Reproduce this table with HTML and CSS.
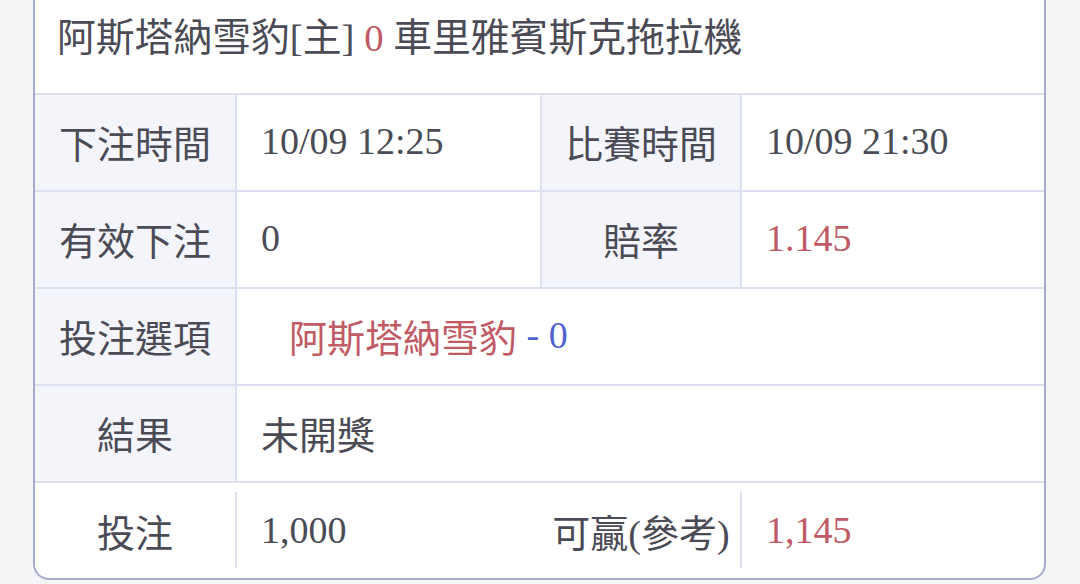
FILE: index.html
```html
<!DOCTYPE html>
<html lang="zh-Hant">
<head>
<meta charset="utf-8">
<link rel="stylesheet" href="styles.css">
</head>
<body>
<div class="card">
  <div class="head">阿斯塔納雪豹[主] <span class="red">0</span> 車里雅賓斯克拖拉機</div>
  <div class="row">
    <div class="cell label">下注時間</div>
    <div class="cell value">10/09 12:25</div>
    <div class="cell label label2">比賽時間</div>
    <div class="cell value last">10/09 21:30</div>
  </div>
  <div class="row">
    <div class="cell label">有效下注</div>
    <div class="cell value">0</div>
    <div class="cell label label2">賠率</div>
    <div class="cell value last red">1.145</div>
  </div>
  <div class="row">
    <div class="cell label">投注選項</div>
    <div class="cell value wide option"><span class="red">阿斯塔納雪豹</span><span class="blue">&nbsp;- 0</span></div>
  </div>
  <div class="row">
    <div class="cell label">結果</div>
    <div class="cell value wide">未開獎</div>
  </div>
  <div class="row final">
    <div class="cell label plain">投注</div>
    <div class="cell value open">1,000</div>
    <div class="cell label label2 plain">可贏(參考)</div>
    <div class="cell value last red">1,145</div>
  </div>
</div>
</body>
</html>
```

FILE: styles.css
```css
html, body {
  margin: 0;
  padding: 0;
  background: #f5f5f7;
}
body {
  font-family: "Liberation Serif", "Noto Sans CJK TC", serif;
  font-size: 38px;
  color: #4a4b55;
}
.card {
  margin-left: 33px;
  width: 1009px;
  background: #fff;
  border: 2px solid #a6aacf;
  border-top: none;
  border-radius: 0 0 16px 16px;
  overflow: hidden;
}
.head {
  padding: 14px 0 31px 22px;
  font-size: 38.8px;
  line-height: 48px;
  border-bottom: 2px solid #dde0f0;
  white-space: nowrap;
}
.row {
  display: flex;
  height: 97px;
  border-bottom: 2px solid #dde0f0;
  box-sizing: border-box;
}
.row.final {
  border-bottom: none;
  height: 95px;
  padding: 9px 0 10px;
}
.cell {
  display: flex;
  align-items: center;
  box-sizing: border-box;
  white-space: nowrap;
  padding-bottom: 3px;
}
.final .cell {
  padding-bottom: 0;
}
.label {
  width: 202px;
  justify-content: center;
  background: #f4f5fb;
  border-right: 2px solid #dde0f0;
}
.label2 {
  width: 200px;
}
.label.plain {
  background: #fff;
}
.value {
  width: 305px;
  padding-left: 24px;
  border-right: 2px solid #dde0f0;
}
.value.open {
  border-right-color: transparent;
}
.value.last {
  width: 302px;
  border-right: none;
}
.value.wide {
  flex: 1;
  border-right: none;
}
.value.option {
  padding-left: 52px;
}
.red {
  color: #c05a64;
}
.blue {
  color: #4f63d2;
}
```
